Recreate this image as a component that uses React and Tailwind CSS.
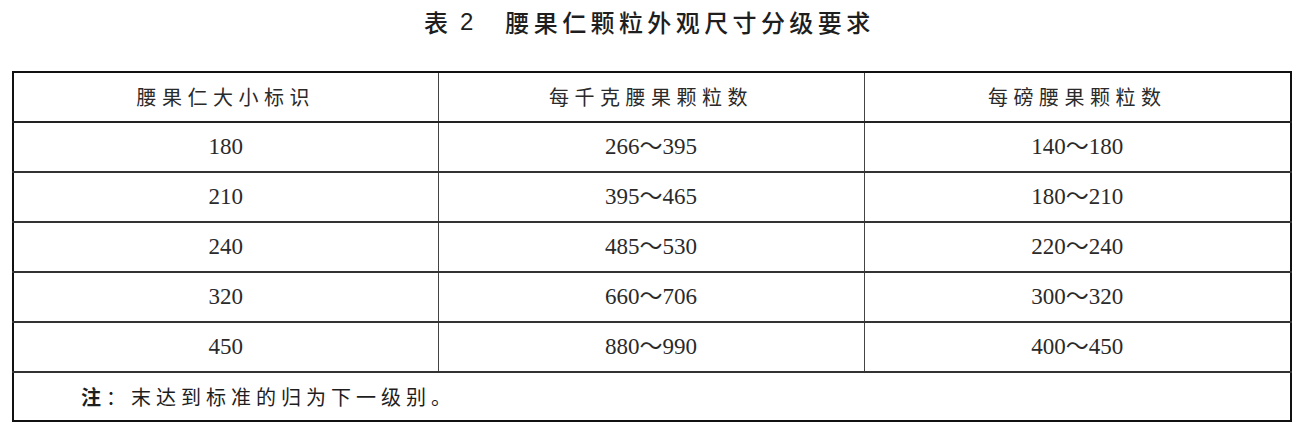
const rows = [
  ['180', '266～395', '140～180'],
  ['210', '395～465', '180～210'],
  ['240', '485～530', '220～240'],
  ['320', '660～706', '300～320'],
  ['450', '880～990', '400～450'],
];

const cjk = '[font-family:"Noto_Sans_CJK_SC",sans-serif]';

export default function App() {
  return (
    <div className="w-[1306px] h-[436px] bg-white text-[#1e1e1e] [font-family:'Noto_Sans_CJK_SC',sans-serif]">
      {/* 表题 */}
      <div className="h-[44px] flex items-center pl-[424px] text-[24px] font-medium">
        <span>表</span>
        <span className="ml-[12px] [font-family:'Liberation_Sans',sans-serif]">2</span>
        <span className="ml-[32px] tracking-[4.4px]">腰果仁颗粒外观尺寸分级要求</span>
      </div>

      <div className="pl-[12px] pt-[27px]">
        <table className="w-[1280px] table-fixed border-collapse border-2 border-[#111]">
          <thead>
            <tr className="h-[50px] border-b-2 border-[#222] text-[#2a2a2a]">
              <th className="w-[425px] font-normal text-[20px] tracking-[5.5px] border-r border-[#444]">腰果仁大小标识</th>
              <th className="w-[426px] font-normal text-[20px] tracking-[5.5px] border-r border-[#444]">每千克腰果颗粒数</th>
              <th className="font-normal text-[20px] tracking-[5.5px]">每磅腰果颗粒数</th>
            </tr>
          </thead>
          <tbody className="[font-family:'Liberation_Serif','Noto_Sans_CJK_SC',serif] text-[23px] text-[#2a2a2a]">
            {rows.map((r) => (
              <tr key={r[0]} className="h-[50px] border-b-2 border-[#333]">
                {r.map((c, i) => (
                  <td key={i} className={`text-center pt-[1px] ${i < 2 ? 'border-r border-[#444]' : ''}`}>
                    {c}
                  </td>
                ))}
              </tr>
            ))}
            <tr className="h-[49px]">
              <td colSpan={3} className={`pl-[67px] text-[20px] tracking-[5px] text-[#1e1e1e] ${cjk}`}>
                <span className="font-bold">注</span>：末达到标准的归为下一级别。
              </td>
            </tr>
          </tbody>
        </table>
      </div>
    </div>
  );
}
